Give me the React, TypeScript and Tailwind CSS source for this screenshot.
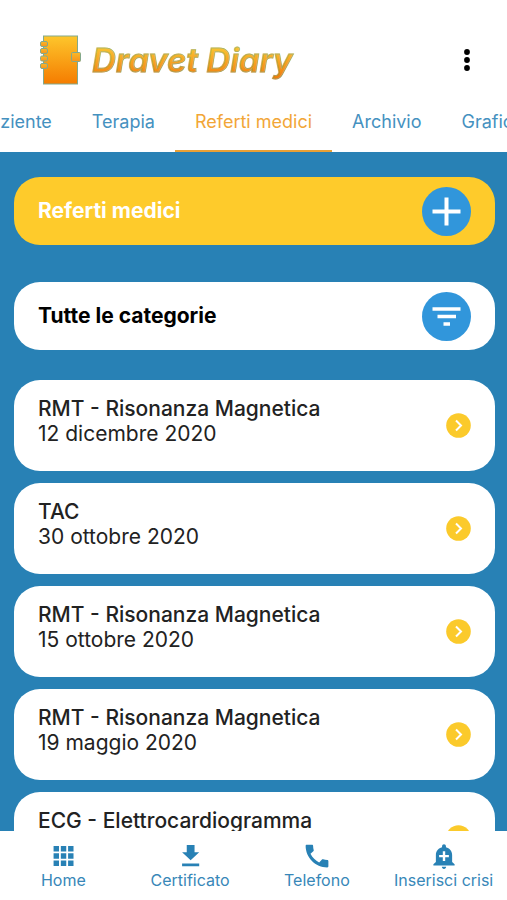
import type { ReactNode } from "react";

type Report = { id: number; title: string; date: string };

const reports: Report[] = [
  { id: 1, title: "RMT - Risonanza Magnetica", date: "12 dicembre 2020" },
  { id: 2, title: "TAC", date: "30 ottobre 2020" },
  { id: 3, title: "RMT - Risonanza Magnetica", date: "15 ottobre 2020" },
  { id: 4, title: "RMT - Risonanza Magnetica", date: "19 maggio 2020" },
  { id: 5, title: "ECG - Elettrocardiogramma", date: "4 maggio 2020" },
];

function NotebookLogo() {
  return (
    <svg width="44" height="52" viewBox="0 0 44 52" aria-hidden="true" className="shrink-0">
      <defs>
        <linearGradient id="cover" x1="0" y1="0" x2="0" y2="1">
          <stop offset="0" stopColor="#fdc62c" />
          <stop offset="1" stopColor="#f57c00" />
        </linearGradient>
        <linearGradient id="ring" x1="0" y1="0" x2="0" y2="1">
          <stop offset="0" stopColor="#fbb829" />
          <stop offset="1" stopColor="#f8941a" />
        </linearGradient>
      </defs>
      <g stroke="#83a98c" strokeWidth="1">
        <rect x="5.500" y="2" width="34" height="48" fill="url(#cover)" />
        <rect x="2.500" y="7.500" width="7" height="5" rx="1.500" fill="url(#ring)" />
        <rect x="2.500" y="14.500" width="7" height="5" rx="1.500" fill="url(#ring)" />
        <rect x="2.500" y="22" width="7" height="5" rx="1.500" fill="url(#ring)" />
        <rect x="2.500" y="29.500" width="7" height="5" rx="1.500" fill="url(#ring)" />
        <rect x="33.500" y="18.500" width="9" height="9" rx="1" fill="url(#ring)" />
      </g>
    </svg>
  );
}

function Tab({ children, active = false }: { children: ReactNode; active?: boolean }) {
  return (
    <a
      href="#"
      aria-current={active ? "page" : undefined}
      className={
        active
          ? "flex shrink-0 items-center border-b-2 border-[#e8a036] px-5 pt-2 text-[#f2a637]"
          : "flex shrink-0 items-center border-b-2 border-transparent px-5 pt-2 text-[#4591bf]"
      }
    >
      {children}
    </a>
  );
}

function ReportCard({ report }: { report: Report }) {
  return (
    <li>
      <a
        href="#"
        className="flex h-[91px] items-center justify-between rounded-[26px] bg-white px-6 text-[#222222]"
      >
        <span className="flex flex-col pb-[10px] text-[21px] leading-[25px]">
          <span className="font-medium">{report.title}</span>
          <span>{report.date}</span>
        </span>
        <svg width="25" height="25" viewBox="0 0 25 25" aria-hidden="true" className="shrink-0">
          <circle cx="12.500" cy="12.500" r="12.300" fill="#fbca2b" />
          <path d="M10 7.500l5 5-5 5" fill="none" stroke="#fff" strokeWidth="2" />
        </svg>
      </a>
    </li>
  );
}

function NavItem({ label, path }: { label: string; path: string }) {
  return (
    <a href="#" className="flex flex-1 flex-col items-center pt-3 text-[#3787b8]">
      <svg width="26" height="26" viewBox="0 0 24 24" fill="#2881b5" aria-hidden="true">
        <path d={path} />
      </svg>
      <span className="text-base leading-[22px] whitespace-nowrap">{label}</span>
    </a>
  );
}

export default function App() {
  return (
    <div className="flex h-screen flex-col bg-[#2881b5] font-['Inter','Liberation_Sans',sans-serif]">
      <header className="shrink-0 bg-white">
        <div className="flex items-center justify-between pt-[34px] pr-[28px] pl-[38px]">
          <div className="flex h-[52px] items-center gap-[10px]">
            <NotebookLogo />
            <h1 className="bg-linear-to-b from-[#f9cb35] from-20% to-[#ef7c0a] to-85% bg-clip-text pr-1 text-[33px] leading-[52px] font-semibold whitespace-nowrap text-transparent italic [-webkit-text-stroke:1px_#7fae8a90]">
              Dravet Diary
            </h1>
          </div>
          <button type="button" aria-label="Menu" className="flex w-6 justify-center">
            <svg width="8" height="24" viewBox="0 0 8 24" fill="#000" aria-hidden="true">
              <circle cx="4" cy="4" r="2.900" />
              <circle cx="4" cy="12" r="2.900" />
              <circle cx="4" cy="20" r="2.900" />
            </svg>
          </button>
        </div>
        <nav aria-label="Sezioni" className="flex h-[66px] overflow-hidden text-lg">
          <div className="flex flex-1 basis-0 justify-end overflow-hidden">
            <Tab>Paziente</Tab>
            <Tab>Terapia</Tab>
          </div>
          <Tab active>Referti medici</Tab>
          <div className="flex flex-1 basis-0 overflow-hidden">
            <Tab>Archivio</Tab>
            <Tab>Grafici</Tab>
          </div>
        </nav>
      </header>

      <main className="min-h-0 flex-1 overflow-hidden pt-[25px] pr-3 pl-[14px]">
        <section className="flex h-[68px] items-center justify-between rounded-[26px] bg-[#fecb2b] px-6">
          <h2 className="text-[21px] font-bold text-white">Referti medici</h2>
          <button type="button" aria-label="Aggiungi referto" className="shrink-0">
            <svg width="49" height="49" viewBox="0 0 49 49" aria-hidden="true">
              <circle cx="24.500" cy="24.500" r="24.500" fill="#3196db" />
              <path d="M24.500 10.500v28M10.500 24.500h28" stroke="#fff" strokeWidth="4" />
            </svg>
          </button>
        </section>

        <section className="mt-[37px] flex h-[68px] items-center justify-between rounded-[26px] bg-white px-6">
          <h2 className="text-[21px] font-bold text-black">Tutte le categorie</h2>
          <button type="button" aria-label="Filtra categorie" className="shrink-0">
            <svg width="49" height="49" viewBox="0 0 49 49" aria-hidden="true">
              <circle cx="24.500" cy="24.500" r="24.500" fill="#3196db" />
              <path d="M10.500 17h28M15.500 24.500h18.500M21.500 32h6.500" stroke="#fff" strokeWidth="3.600" />
            </svg>
          </button>
        </section>

        <ul className="mt-[30px] flex flex-col gap-3">
          {reports.map((report) => (
            <ReportCard key={report.id} report={report} />
          ))}
        </ul>
      </main>

      <nav aria-label="Principale" className="flex h-[69px] shrink-0 bg-white">
        <NavItem
          label="Home"
          path="M3.300 2.800h5v5h-5zM10 2.800h5v5h-5zM16.700 2.800h5v5h-5zM3.300 9.500h5v5h-5zM10 9.500h5v5h-5zM16.700 9.500h5v5h-5zM3.300 16.200h5v5h-5zM10 16.200h5v5h-5zM16.700 16.200h5v5h-5z"
        />
        <NavItem label="Certificato" path="M20.500 8.500h-4.300V1.800H9v6.700H4.700l7.900 7.500zM4.700 19v2.400h15.800V19z" />
        <NavItem
          label="Telefono"
          path="M6 10c1.700 3.400 4.600 6.300 8 8l2.400-2.600c.3-.35.800-.48 1.250-.35 1.200.35 2.500.55 3.850.55.600 0 1 .4 1 1v4.900c0 .6-.4 1-1 1C10.500 22.500 1.500 13.500 1.500 2.500c0-.6.4-1 1-1h4.900c.6 0 1 .4 1 1 0 1.350.2 2.650.55 3.850.13.450 0 .950-.35 1.250z"
        />
        <NavItem
          label="Inserisci crisi"
          path="M10.010 22.010c0 1.100.89 1.990 1.990 1.990s1.990-.89 1.990-1.990zM19.500 17.500V11c0-3.500-2.400-6.300-5.700-7.100v-.8C13.800 2.100 13 1.200 12 1.200s-1.800.9-1.800 1.900v.8C6.900 4.700 4.500 7.500 4.500 11v6.500L2.200 19.500V20.800h19.600v-1.300zM16.500 13.200h-3.400v3.400h-2.200v-3.400H7.500V11h3.400V7.600h2.200V11h3.400z"
        />
      </nav>
    </div>
  );
}
